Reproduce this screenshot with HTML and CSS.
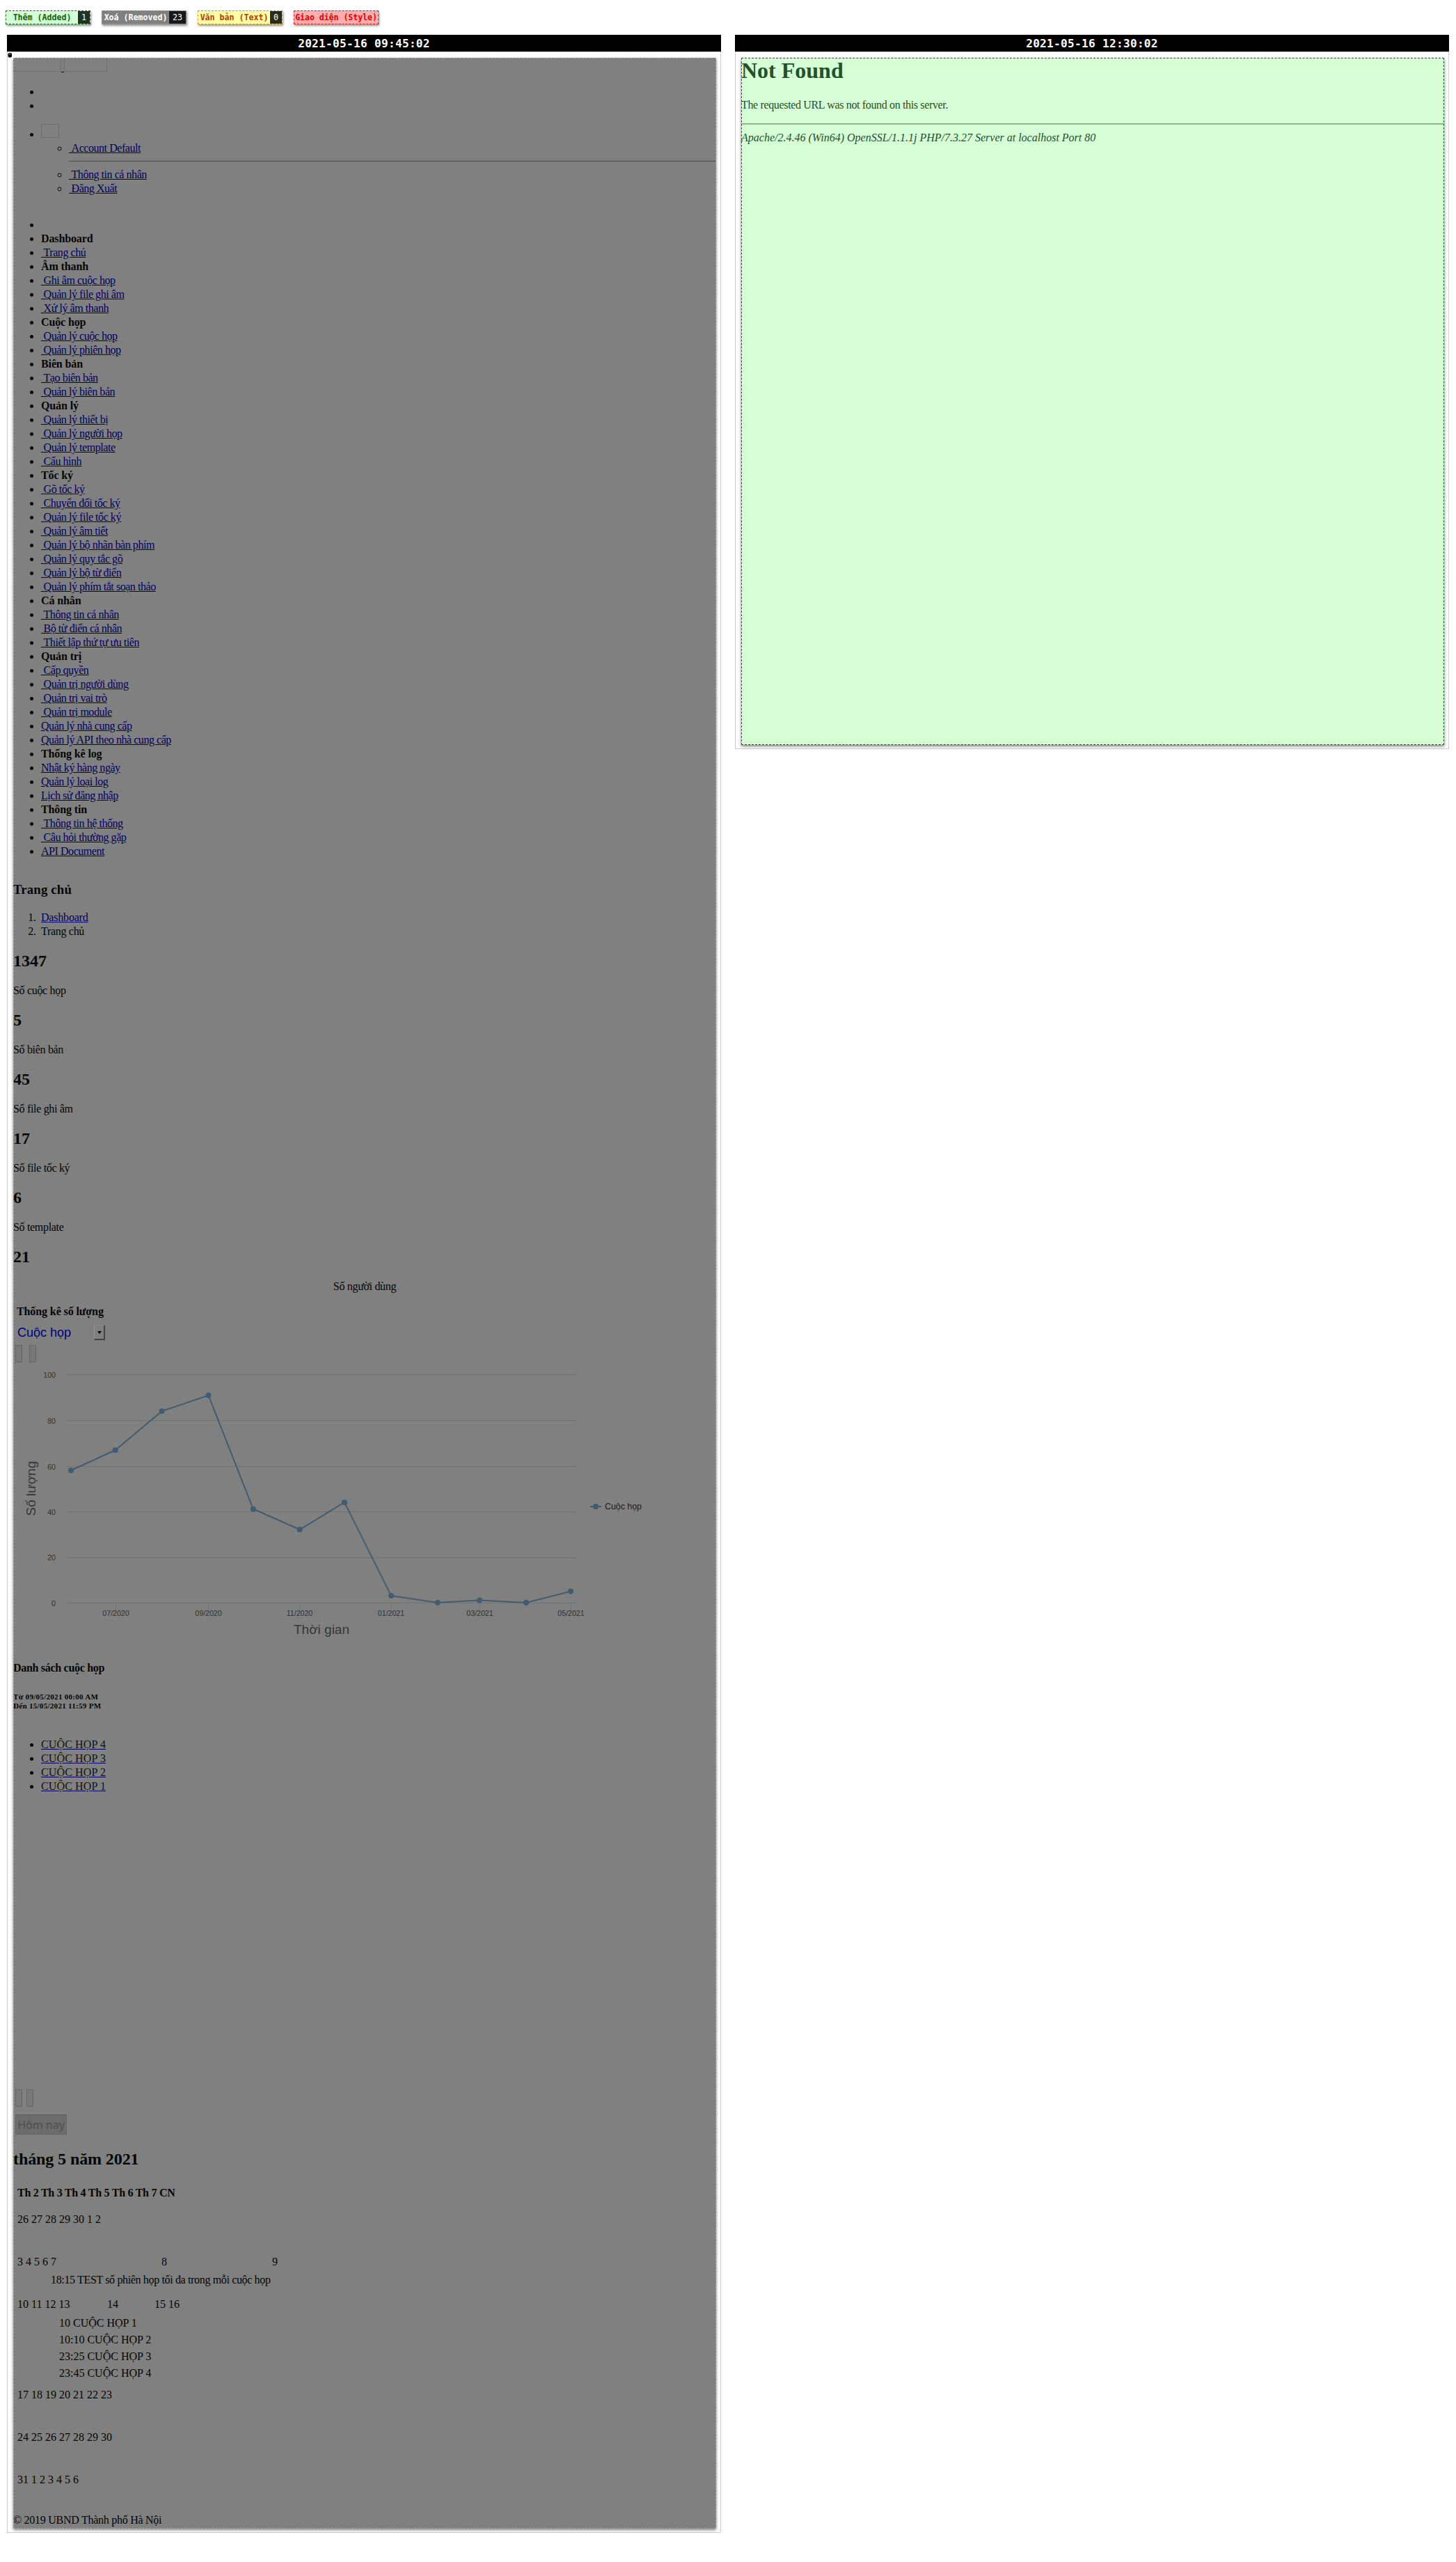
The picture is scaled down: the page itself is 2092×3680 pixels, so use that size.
FILE: index.html
```html
<!DOCTYPE html>
<html lang="vi">
<head>
<meta charset="utf-8">
<title>2021-05-16 09:45:02 / 12:30:02</title>
<link rel="stylesheet" href="styles.css">
</head>
<body>
<header class="legend">
  <div class="tag tag-added"><span class="tag-label">Thêm (Added)</span><span class="count">1</span></div>
  <div class="tag tag-removed"><span class="tag-label">Xoá (Removed)</span><span class="count">23</span></div>
  <div class="tag tag-text"><span class="tag-label">Văn bản (Text)</span><span class="count">0</span></div>
  <div class="tag tag-style"><span class="tag-label">Giao diện (Style)</span></div>
</header>
<main class="compare">
  <section class="pane">
    <h1 class="stamp">2021-05-16 09:45:02</h1>
    <div class="frame">
      <svg class="speck" width="7" height="8" viewBox="0 0 7 8"><rect x="0.5" y="1" width="5.5" height="6.5" rx="2"/><rect x="2" y="2" width="2" height="1" fill="#ccc"/></svg>
      <div class="doc removed">
        <div class="logos"><span class="ph ph-a"></span><span class="dash"></span><span class="ph ph-b"></span></div>
        <ul class="list top-list"><li></li><li></li></ul>
        <ul class="list user-list">
          <li class="user"><span class="avatar"></span>
            <ul class="sub">
              <li><a>&nbsp;Account Default</a></li>
              <li class="plain"><hr></li>
              <li><a>&nbsp;Thông tin cá nhân</a></li>
              <li><a>&nbsp;Đăng Xuất</a></li>
            </ul>
          </li>
        </ul>
        <ul class="list menu">
          <li></li>
          <li><b>Dashboard</b></li>
          <li><a>&nbsp;Trang chủ</a></li>
          <li><b>Âm thanh</b></li>
          <li><a>&nbsp;Ghi âm cuộc họp</a></li>
          <li><a>&nbsp;Quản lý file ghi âm</a></li>
          <li><a>&nbsp;Xử lý âm thanh</a></li>
          <li><b>Cuộc họp</b></li>
          <li><a>&nbsp;Quản lý cuộc họp</a></li>
          <li><a>&nbsp;Quản lý phiên họp</a></li>
          <li><b>Biên bản</b></li>
          <li><a>&nbsp;Tạo biên bản</a></li>
          <li><a>&nbsp;Quản lý biên bản</a></li>
          <li><b>Quản lý</b></li>
          <li><a>&nbsp;Quản lý thiết bị</a></li>
          <li><a>&nbsp;Quản lý người họp</a></li>
          <li><a>&nbsp;Quản lý template</a></li>
          <li><a>&nbsp;Cấu hình</a></li>
          <li><b>Tốc ký</b></li>
          <li><a>&nbsp;Gõ tốc ký</a></li>
          <li><a>&nbsp;Chuyển đổi tốc ký</a></li>
          <li><a>&nbsp;Quản lý file tốc ký</a></li>
          <li><a>&nbsp;Quản lý âm tiết</a></li>
          <li><a>&nbsp;Quản lý bộ nhãn bàn phím</a></li>
          <li><a>&nbsp;Quản lý quy tắc gõ</a></li>
          <li><a>&nbsp;Quản lý bộ từ điển</a></li>
          <li><a>&nbsp;Quản lý phím tắt soạn thảo</a></li>
          <li><b>Cá nhân</b></li>
          <li><a>&nbsp;Thông tin cá nhân</a></li>
          <li><a>&nbsp;Bộ từ điển cá nhân</a></li>
          <li><a>&nbsp;Thiết lập thứ tự ưu tiên</a></li>
          <li><b>Quản trị</b></li>
          <li><a>&nbsp;Cấp quyền</a></li>
          <li><a>&nbsp;Quản trị người dùng</a></li>
          <li><a>&nbsp;Quản trị vai trò</a></li>
          <li><a>&nbsp;Quản trị module</a></li>
          <li><a>Quản lý nhà cung cấp</a></li>
          <li><a>Quản lý API theo nhà cung cấp</a></li>
          <li><b>Thống kê log</b></li>
          <li><a>Nhật ký hàng ngày</a></li>
          <li><a>Quản lý loại log</a></li>
          <li><a>Lịch sử đăng nhập</a></li>
          <li><b>Thông tin</b></li>
          <li><a>&nbsp;Thông tin hệ thống</a></li>
          <li><a>&nbsp;Câu hỏi thường gặp</a></li>
          <li><a>API Document</a></li>
        </ul>
        <h3 class="page-title">Trang chủ</h3>
        <ol class="list crumbs"><li><a>Dashboard</a></li><li>Trang chủ</li></ol>
        <div class="stats">
          <div><h2>1347</h2><p>Số cuộc họp</p></div>
          <div><h2>5</h2><p>Số biên bản</p></div>
          <div><h2>45</h2><p>Số file ghi âm</p></div>
          <div><h2>17</h2><p>Số file tốc ký</p></div>
          <div><h2>6</h2><p>Số template</p></div>
          <div><h2>21</h2><p class="center">Số người dùng</p></div>
        </div>
        <h4 class="chart-title">Thống kê số lượng</h4>
        <div class="select"><span>Cuộc họp</span><span class="arrow"><svg width="6" height="4" viewBox="0 0 6 4"><path d="M0 0h6L3 4z"/></svg></span></div>
        <div class="nav nav-chart"><span class="btn"></span><span class="btn"></span></div>
        <svg class="chart" width="1010" height="408" viewBox="19 1957 1010 408">
          <g stroke="#6b7273" stroke-width="1">
            <path d="M95 1974.5H828M95 2040.5H828M95 2106.5H828M95 2171.5H828M95 2237.5H828M95 2302.5H828"/>
            <path d="M166.5 2303v8M299.5 2303v8M430.5 2303v8M562.5 2303v8M689.5 2303v8M820.5 2303v8"/>
          </g>
          <path class="series" d="M102 2112L165.7 2083L232.6 2027L299.5 2004.3L363.8 2167.5L430.7 2197L495 2158L562 2292L628.8 2302L689 2298.6L756 2302L820 2285.7"/>
          <g class="dots">
            <circle cx="102" cy="2112" r="4"/><circle cx="165.7" cy="2083" r="4"/><circle cx="232.6" cy="2027" r="4"/><circle cx="299.5" cy="2004.3" r="4"/><circle cx="363.8" cy="2167.5" r="4"/><circle cx="430.7" cy="2197" r="4"/><circle cx="495" cy="2158" r="4"/><circle cx="562" cy="2292" r="4"/><circle cx="628.8" cy="2302" r="4"/><circle cx="689" cy="2298.6" r="4"/><circle cx="756" cy="2302" r="4"/><circle cx="820" cy="2285.7" r="4"/>
            <circle cx="856" cy="2164" r="4"/>
          </g>
          <path class="series" d="M848 2164h16"/>
          <g class="tick end">
            <text x="80" y="1979">100</text><text x="80" y="2045">80</text><text x="80" y="2110.500">60</text><text x="80" y="2176">40</text><text x="80" y="2241">20</text><text x="80" y="2307">0</text>
          </g>
          <g class="tick mid">
            <text x="166.500" y="2320.500">07/2020</text><text x="299.500" y="2320.500">09/2020</text><text x="430.500" y="2320.500">11/2020</text><text x="562" y="2320.500">01/2021</text><text x="689.500" y="2320.500">03/2021</text><text x="820.500" y="2320.500">05/2021</text>
          </g>
          <text class="axis" x="422" y="2346.500" textLength="80">Thời gian</text>
          <text class="axis" transform="translate(50.500 2177.500) rotate(-90)" textLength="79">Số lượng</text>
          <text class="key" x="869" y="2168" textLength="53">Cuộc họp</text>
        </svg>
        <h4 class="meet-title">Danh sách cuộc họp</h4>
        <h6 class="range">Từ 09/05/2021 00:00 AM<br>Đến 15/05/2021 11:59 PM</h6>
        <ul class="list meetings"><li><a>CUỘC HỌP 4</a></li><li><a>CUỘC HỌP 3</a></li><li><a>CUỘC HỌP 2</a></li><li><a>CUỘC HỌP 1</a></li></ul>
        <div class="nav nav-cal"><span class="btn"></span><span class="btn"></span></div>
        <span class="today">Hôm nay</span>
        <h2 class="month">tháng 5 năm 2021</h2>
        <div class="calendar">
          <div class="days">Th 2 Th 3 Th 4 Th 5 Th 6 Th 7 CN</div>
          <div class="week first">26 27 28 29 30 1 2</div>
          <div class="week split-a"><span>3 4 5 6 7</span><span>8</span><span>9</span></div>
          <div class="event">18:15 TEST số phiên họp tối đa trong mỗi cuộc họp</div>
          <div class="week split-b"><span>10 11 12 13</span><span>14</span><span>15 16</span></div>
          <div class="events"><div>10 CUỘC HỌP 1</div><div>10:10 CUỘC HỌP 2</div><div>23:25 CUỘC HỌP 3</div><div>23:45 CUỘC HỌP 4</div></div>
          <div class="week after">17 18 19 20 21 22 23</div>
          <div class="week">24 25 26 27 28 29 30</div>
          <div class="week">31 1 2 3 4 5 6</div>
        </div>
        <footer class="foot">© 2019 UBND Thành phố Hà Nội</footer>
      </div>
    </div>
  </section>
  <section class="pane">
    <h1 class="stamp">2021-05-16 12:30:02</h1>
    <div class="frame">
      <div class="doc added">
        <h1 class="nf">Not Found</h1>
        <p class="msg">The requested URL was not found on this server.</p>
        <hr>
        <address>Apache/2.4.46 (Win64) OpenSSL/1.1.1j PHP/7.3.27 Server at localhost Port 80</address>
      </div>
    </div>
  </section>
</main>
</body>
</html>
```
FILE: styles.css
```css
* { box-sizing: border-box; }
body { margin: 0; background: #fff; font: 16px/20px "Liberation Serif", serif; color: #000; }
h1, h2, h3, h4, h6, p, ul, ol, hr { margin: 0; padding: 0; }

.legend { display: flex; gap: 16px; padding: 15px 8px 0; height: 50px; font: bold 11.6px/20px "DejaVu Sans Mono", monospace; }
.tag { display: flex; width: 122px; height: 20px; border: 1px dashed; box-shadow: 1px 2px 3px rgba(0,0,0,.45); line-height: 18px; white-space: nowrap; }
.tag-label { flex: 1; text-align: center; }
.count { padding: 0 5px; background: #222; color: #fff; font-weight: normal; }
.tag-added { background: #d4ffd4; border-color: #1c6b22; color: #106010; }
.tag-added .count { background: #223322; }
.tag-removed { background: #808080; border-color: #999; color: #fff; }
.tag-removed .count { background: #191919; }
.tag-text { background: #ffffa8; border-color: #c59a30; color: #b03c00; }
.tag-text .count { background: #2b2b1c; }
.tag-style { background: #ffadad; border-color: #d02020; color: #e00000; font-size: 11.5px; }

.compare { display: grid; grid-template-columns: 1026px 1026px; gap: 20px; padding-left: 10px; align-items: start; }
.stamp { height: 24px; background: #000; color: #fff; text-align: center; font: bold 16px/25px "DejaVu Sans Mono", monospace; letter-spacing: .35px; }
.frame { position: relative; padding: 8px; border: 1px solid #ccc; }
.speck { position: absolute; left: 0; top: 0; }
.doc { display: flow-root; width: 1010px; box-shadow: 0 2px 4px rgba(0,0,0,.5); outline: 1px dashed; outline-offset: -1px; }
.removed { height: 3549px; margin-bottom: -3px; background: #808080; outline-color: #a0a0a0; color: #050505; }
.added { height: 987px; margin-bottom: -3px; background: #d6ffd6; outline-color: #176322; color: #24502a; }

.logos { display: flex; height: 20px; }
.ph { height: 20px; border: 1px solid #707070; }
.ph-a { width: 69px; }
.ph-b { width: 62px; }
.dash { width: 4px; height: 21px; border-bottom: 1px solid #00003c; }
.list { padding-left: 40px; }
.list li { height: 20px; }
.list a { color: #000062; text-decoration: underline; letter-spacing: -.45px; }
.list b { letter-spacing: -.12px; }
.top-list { margin-top: 19px; }
.user-list { margin-top: 16px; }
.user-list li.user { height: 103px; line-height: 20px; }
.avatar { display: inline-block; width: 26px; height: 20px; border: 1px solid #6c6c6c; vertical-align: baseline; }
.sub { padding-left: 40px; list-style: circle; }
.sub .plain { list-style: none; height: 18px; padding-top: 8px; }
.sub hr { height: 1px; border: 0; background: #4a4a4a; margin-right: 1px; }
.menu { margin-top: 32px; }
.page-title { margin-top: 34px; font-size: 18.72px; line-height: 22px; letter-spacing: .2px; }
.crumbs { margin-top: 19px; letter-spacing: -.3px; }
.list.crumbs a { letter-spacing: -.2px; }
.crumbs li::marker { content: counter(list-item) ".\00a0\00a0"; }
.stats { margin-top: 17px; display: grid; row-gap: 17px; }
.stats h2 { font-size: 24px; line-height: 30px; margin-bottom: 18px; }
.stats p { letter-spacing: -.32px; }
.center { text-align: center; }
.chart-title { margin: 16px 0 9px 5px; font-size: 16px; letter-spacing: -.1px; }
.select { display: flex; justify-content: space-between; width: 126px; height: 22px; margin-left: 6px; font: 18px/22px "Liberation Sans", sans-serif; color: #00007a; }
.arrow { display: grid; place-items: center; width: 16px; background: #808080; border: 1px solid #929292; border-width: 1px 2px 2px 1px; border-color: #8a8a8a #444 #444 #929292; }
.nav { display: flex; height: 25px; margin-left: 3px; }
.nav-chart { gap: 10px; margin-top: 7px; }
.btn { width: 10px; border: 1px solid #666; background: #787878; }
.chart { display: block; font-family: "Liberation Sans", sans-serif; }
.series { fill: none; stroke: #405c74; stroke-width: 2; }
.dots { fill: #405c74; }
.tick { font-size: 10.6px; fill: #303030; }
.end { text-anchor: end; }
.mid { text-anchor: middle; }
.axis { font-size: 19px; fill: #363636; }
.key { font-size: 12.5px; fill: #1c1c1c; }
.meet-title { margin-top: 21px; font-size: 16px; letter-spacing: -.3px; }
.range { margin-top: 25px; font-size: 11px; line-height: 13px; letter-spacing: .3px; }
.meetings { margin-top: 39px; }
.list.meetings a { color: #111; text-decoration-color: #000062; letter-spacing: .12px; }
.nav-cal { gap: 6px; margin-top: 425px; }
.today { display: block; width: 74px; height: 29px; margin: 11px 0 0 3px; border: 1px solid #646464; background: #6c6c6c; color: #4f4f4f; text-align: center; font: 16px/29px "Noto Sans", sans-serif; }
.month { margin-top: 20px; font-size: 24px; line-height: 30px; letter-spacing: -.1px; }
.calendar { padding-left: 6px; }
.days { margin-top: 24px; font-weight: bold; letter-spacing: -.27px; }
.week { margin-top: 41px; }
.week.first { margin-top: 18px; }
.split-a { display: grid; grid-template-columns: 207px 159px auto; }
.event { margin: 6px 0 0 48px; letter-spacing: -.35px; }
.week.split-b { display: grid; grid-template-columns: 129px 68px auto; margin-top: 15px; }
.events { margin: 5px 0 0 60px; line-height: 24px; }
.week.after { margin-top: 9px; }
.foot { margin-top: 38px; letter-spacing: -.27px; }

.nf { font-size: 32px; line-height: 36px; }
.msg { margin-top: 22px; letter-spacing: -.35px; }
.added hr { height: 2px; margin: 16px 0 9px; border: 0; background: #8fb596; }
```
